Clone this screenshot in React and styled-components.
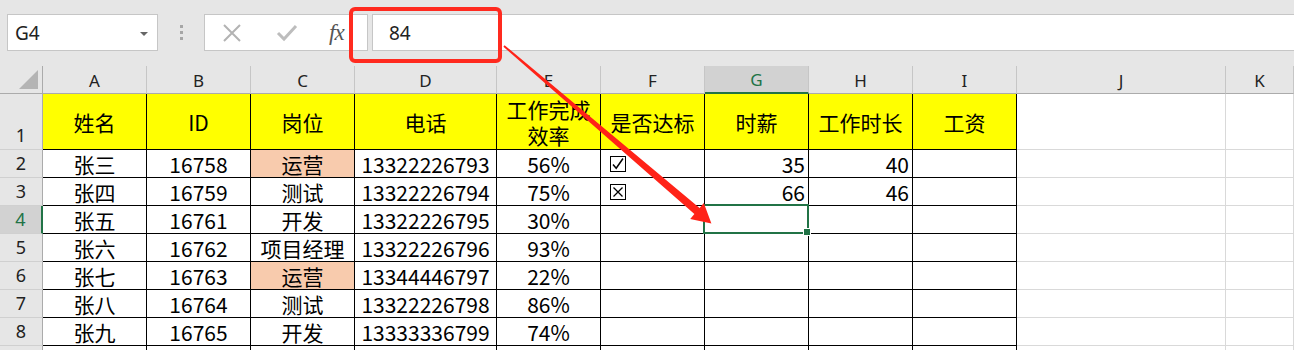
import styled, { createGlobalStyle } from "styled-components";

const GlobalStyle = createGlobalStyle`
  html, body { margin: 0; padding: 0; background: #fff; }
  body { font-family: "Noto Sans CJK SC", "Noto Sans", sans-serif; }
`;

const COLS = ["A", "B", "C", "D", "E", "F", "G", "H", "I", "J", "K"];
const WIDTHS = "43px 104px 104px 104px 142px 104px 104px 104px 104px 104px 209px 1fr";

const HEAD = ["姓名", "ID", "岗位", "电话", "工作完成\n效率", "是否达标", "时薪", "工作时长", "工资"];

const ROWS = [
  ["张三", "16758", "运营", "13322226793", "56%", "check", "35", "40", ""],
  ["张四", "16759", "测试", "13322226794", "75%", "cross", "66", "46", ""],
  ["张五", "16761", "开发", "13322226795", "30%", "", "", "", ""],
  ["张六", "16762", "项目经理", "13322226796", "93%", "", "", "", ""],
  ["张七", "16763", "运营", "13344446797", "22%", "", "", "", ""],
  ["张八", "16764", "测试", "13322226798", "86%", "", "", "", ""],
  ["张九", "16765", "开发", "13333336799", "74%", "", "", "", ""],
  ["", "", "", "", "", "", "", "", ""],
];

const Page = styled.div`
  position: relative;
  width: 1294px;
  height: 350px;
  overflow: hidden;
  background: #fff;
`;

const TopBar = styled.div`
  height: 66px;
  box-sizing: border-box;
  background: #e6e6e6;
  padding-top: 14px;
  padding-left: 7px;
  display: flex;
  align-items: flex-start;
`;

const NameBox = styled.div`
  width: 151px;
  height: 37px;
  box-sizing: border-box;
  background: #fff;
  border: 1px solid #c6c6c6;
  display: flex;
  align-items: center;
  justify-content: space-between;
  padding: 0 9px 0 7px;
  font-family: "Noto Sans", sans-serif;
  font-size: 19px;
  color: #222;
`;

const DropArrow = styled.span`
  width: 0;
  height: 0;
  border-left: 4px solid transparent;
  border-right: 4px solid transparent;
  border-top: 4px solid #666;
  margin-top: 2px;
`;

const Grip = styled.div`
  width: 46px;
  height: 37px;
  display: flex;
  flex-direction: column;
  align-items: center;
  justify-content: center;
  gap: 3px;
  span {
    width: 3px;
    height: 3px;
    background: #a6a6a6;
  }
`;

const ButtonBox = styled.div`
  width: 164px;
  height: 37px;
  box-sizing: border-box;
  background: #fff;
  border: 1px solid #c6c6c6;
  display: flex;
  align-items: center;
  padding-left: 17px;
  gap: 34px;
`;

const Fx = styled.span`
  font-family: "Liberation Serif", serif;
  font-style: italic;
  font-size: 23px;
  line-height: 28px;
  color: #555;
  margin-left: -3px;
  letter-spacing: -1px;
`;

const FormulaInput = styled.div`
  flex: 1;
  margin-left: 4px;
  height: 37px;
  box-sizing: border-box;
  background: #fff;
  border: 1px solid #c6c6c6;
  border-right: none;
  display: flex;
  align-items: center;
  padding-left: 16px;
  font-family: "Noto Sans", sans-serif;
  font-size: 19px;
  color: #222;
`;

const Sheet = styled.div`
  display: grid;
  grid-template-columns: ${WIDTHS};
  grid-template-rows: 28px 56px;
  grid-auto-rows: 28px;
`;

const Corner = styled.div`
  position: relative;
  background: #e6e6e6;
  border-right: 1px solid #ababab;
  border-bottom: 1px solid #ababab;
  &::after {
    content: "";
    position: absolute;
    right: 4px;
    bottom: 4px;
    width: 0;
    height: 0;
    border-left: 19px solid transparent;
    border-bottom: 19px solid #b4b4b4;
  }
`;

const ColHead = styled.div`
  box-sizing: border-box;
  background: ${(p) => (p.$active ? "#d2d2d2" : "#e6e6e6")};
  color: ${(p) => (p.$active ? "#217346" : "#222")};
  border-right: 1px solid #c6c6c6;
  border-bottom: ${(p) => (p.$active ? "2px solid #217346" : "1px solid #ababab")};
  display: flex;
  align-items: center;
  justify-content: center;
  padding-top: 2px;
  font-family: "Noto Sans", sans-serif;
  font-size: 17px;
  line-height: 22px;
`;

const RowHead = styled.div`
  box-sizing: border-box;
  background: ${(p) => (p.$active ? "#d2d2d2" : "#e6e6e6")};
  color: ${(p) => (p.$active ? "#217346" : "#222")};
  border-right: ${(p) => (p.$active ? "2px solid #217346" : "1px solid #ababab")};
  border-bottom: 1px solid #d0d0d0;
  display: flex;
  align-items: flex-end;
  justify-content: center;
  padding-bottom: 2px;
  font-family: "Noto Sans", sans-serif;
  font-size: 18px;
  line-height: 24px;
`;

const Cell = styled.div`
  position: relative;
  box-sizing: border-box;
  background: ${(p) => p.$bg || "#fff"};
  border-right: 1px solid ${(p) => (p.$plain ? "#d9d9d9" : "#000")};
  border-bottom: 1px solid ${(p) => (p.$plain ? "#d9d9d9" : "#000")};
  display: flex;
  align-items: center;
  justify-content: ${(p) => p.$align || "center"};
  padding: ${(p) => (p.$align === "flex-end" ? "0 3px 0 0" : p.$align === "flex-start" ? "0 0 0 9px" : "0")};
  font-size: 21px;
  line-height: 26px;
  color: #000;
  text-align: center;
  white-space: pre-line;
`;

const Selection = styled.div`
  position: absolute;
  left: -2px;
  top: -2px;
  right: -1px;
  bottom: -1px;
  border: 2px solid #217346;
  pointer-events: none;
  &::after {
    content: "";
    position: absolute;
    right: -4px;
    bottom: -4px;
    width: 6px;
    height: 6px;
    background: #217346;
    border: 1px solid #fff;
  }
`;

const SelCell = styled(Cell)`
  z-index: 2;
`;

const Callout = styled.div`
  position: absolute;
  left: 349px;
  top: 7px;
  width: 153px;
  height: 56px;
  box-sizing: border-box;
  border: 4px solid #ff2a1f;
  border-radius: 6px;
  pointer-events: none;
`;

const ArrowLayer = styled.svg`
  position: absolute;
  left: 0;
  top: 0;
  pointer-events: none;
  z-index: 3;
`;

const CheckIcon = ({ cross }) => (
  <svg width="16" height="16" viewBox="0 0 16 16">
    <rect x="0.5" y="0.5" width="15" height="15" fill="none" stroke="#000" strokeWidth="1" />
    {cross ? (
      <path d="M3.5 3.5 L12.5 12.5 M12.5 3.5 L3.5 12.5" stroke="#000" strokeWidth="1.3" fill="none" />
    ) : (
      <path d="M3 8.5 L6.2 12.2 L13 2.5" stroke="#000" strokeWidth="1.5" fill="none" />
    )}
  </svg>
);

const CancelIcon = () => (
  <svg width="20" height="20" viewBox="0 0 20 20">
    <path d="M2 2 L18 18 M18 2 L2 18" stroke="#b3b3b3" strokeWidth="2" />
  </svg>
);

const EnterIcon = () => (
  <svg width="22" height="20" viewBox="0 0 22 20">
    <path d="M2 10 L8 16 L20 3" stroke="#bdbdbd" strokeWidth="3" fill="none" />
  </svg>
);

const App = () => {
  const cellFor = (value, ci, ri) => {
    const key = `c${ri}-${ci}`;
    const isOrange = ci === 2 && (ri === 0 || ri === 4);
    const bg = isOrange ? "#f8cbad" : undefined;
    let align = "center";
    if (ci === 5) align = "flex-start";
    if (ci === 6 || ci === 7) align = "flex-end";
    let content = value;
    if (value === "check") content = <CheckIcon />;
    if (value === "cross") content = <CheckIcon cross />;
    if (ci === 6 && ri === 2) {
      return (
        <SelCell key={key} $align={align}>
          <Selection />
        </SelCell>
      );
    }
    return (
      <Cell key={key} $bg={bg} $align={align}>
        {content}
      </Cell>
    );
  };

  return (
    <Page>
      <GlobalStyle />
      <TopBar>
        <NameBox>
          G4
          <DropArrow />
        </NameBox>
        <Grip>
          <span />
          <span />
          <span />
        </Grip>
        <ButtonBox>
          <CancelIcon />
          <EnterIcon />
          <Fx>fx</Fx>
        </ButtonBox>
        <FormulaInput>84</FormulaInput>
      </TopBar>

      <Sheet>
        <Corner />
        {COLS.map((c) => (
          <ColHead key={c} $active={c === "G"}>
            {c}
          </ColHead>
        ))}

        <RowHead>1</RowHead>
        {HEAD.map((h, i) => (
          <Cell key={`h${i}`} $bg="#ffff00">
            {h}
          </Cell>
        ))}
        <Cell $plain />
        <Cell $plain />

        {ROWS.map((row, ri) => [
          <RowHead key={`r${ri}`} $active={ri === 2}>
            {ri < 7 ? ri + 2 : ""}
          </RowHead>,
          ...row.map((v, ci) => cellFor(v, ci, ri)),
          <Cell key={`j${ri}`} $plain />,
          <Cell key={`k${ri}`} $plain />,
        ])}
      </Sheet>

      <Callout />
      <ArrowLayer width="1294" height="350">
        <polygon
          points="503.4,46.8 694.4,214 690.2,219 711.4,223.4 703.8,203 699.6,208 504.6,45.2"
          fill="#ff2318"
        />
      </ArrowLayer>
    </Page>
  );
};

export default App;
